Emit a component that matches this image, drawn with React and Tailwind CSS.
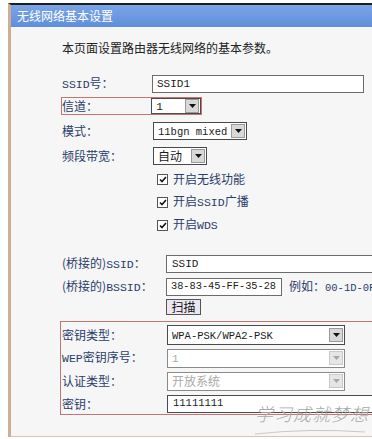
import React from "react";

const cjk = { fontFamily: '"Noto Sans CJK SC", "Noto Sans", sans-serif' };
const mono = '"Liberation Mono", "Noto Sans CJK SC", monospace';

function Latin({ children, size = "text-[11px]" }) {
  return (
    <span className={size} style={{ fontFamily: mono }}>
      {children}
    </span>
  );
}

function Arrow({ disabled }) {
  return (
    <span
      className={
        "flex h-[14px] w-[14px] shrink-0 items-center justify-center border " +
        (disabled ? "border-[#c9c9c9] bg-[#e6e6e6]" : "border-[#9a9a9a] bg-[#d8d8d8]")
      }
    >
      <svg width="7" height="4" viewBox="0 0 7 4">
        <path d="M0 0h7L3.5 4z" fill={disabled ? "#a8a8a8" : "#111"} />
      </svg>
    </span>
  );
}

function Select({ value, width, disabled, h = "h-[18px]" }) {
  return (
    <div
      className={
        "flex items-center justify-between border bg-white pl-[4px] pr-[1px] " +
        h +
        " " +
        (disabled ? "border-[#8a8a8a] text-[#a9a9a9]" : "border-[#4a4a4a] text-[#1b1b1b]")
      }
      style={{ width }}
    >
      <span className="text-[12px] leading-none">{value}</span>
      <Arrow disabled={disabled} />
    </div>
  );
}

function Check({ children }) {
  return (
    <div className="flex h-[20px] items-center pl-[95px]">
      <span className="flex h-[11px] w-[11px] items-center justify-center border border-[#555] bg-white">
        <svg width="8" height="7" viewBox="0 0 8 7">
          <path d="M1 3.5l2 2 4-4.5" stroke="#111" strokeWidth="1.6" fill="none" />
        </svg>
      </span>
      <span className="ml-[5px] text-[12px] text-[#2a3d6b]">{children}</span>
    </div>
  );
}

export default function App() {
  return (
    <div className="relative h-[439px] w-[372px] overflow-hidden bg-white" style={cjk}>
      <div className="ml-[8px] mt-[3px] flex h-[434px] flex-col border-l-[3px] border-t-2 border-l-[#cfae95] border-t-[#1e1e1e]">
        <div className="h-[22px] bg-gradient-to-b from-[#7aa4e6] to-[#5f8fdc] pl-[6px] text-[12px] leading-[22px] text-white">
          无线网络基本设置
        </div>
        <div className="flex-1 border-b border-[#d9c4b3] bg-[#f6f6f6] pl-[51px]">
          <p className="mt-[13px] text-[12px] leading-[16px] text-[#222]">
            本页面设置路由器无线网络的基本参数。
          </p>

          <div className="mt-[19px] flex h-[18px] items-center">
            <span className="w-[90px] text-[12px] text-[#2a3d6b]">
              <Latin size="text-[11.5px]">SSID</Latin>号：
            </span>
            <div className="flex h-[18px] w-[212px] items-center border border-[#6b6b6b] bg-white pl-[4px] text-[#1b1b1b]">
              <Latin>SSID1</Latin>
            </div>
          </div>

          <div className="mt-[4px] flex h-[18px] w-[141px] items-center border border-[#c77474] -ml-[1px]">
            <span className="w-[90px] text-[12px] text-[#2a3d6b]">信道：</span>
            <Select value={<Latin>1</Latin>} width={50} h="h-[16px]" />
          </div>

          <div className="mt-[7px] flex h-[18px] items-center">
            <span className="w-[91px] text-[12px] text-[#2a3d6b]">模式：</span>
            <Select value={<Latin size="text-[10.5px]">11bgn mixed</Latin>} width={94} />
          </div>

          <div className="mt-[7px] flex h-[18px] items-center">
            <span className="w-[91px] text-[12px] text-[#2a3d6b]">频段带宽：</span>
            <Select value="自动" width={54} />
          </div>

          <div className="mt-[4px] flex flex-col gap-[3px]">
            <Check>开启无线功能</Check>
            <Check>
              开启<Latin size="text-[11.5px]">SSID</Latin>广播
            </Check>
            <Check>
              开启<Latin size="text-[11.5px]">WDS</Latin>
            </Check>
          </div>

          <div className="mt-[20px] flex h-[18px] items-center">
            <span className="w-[104px] shrink-0 text-[12px] text-[#2a3d6b]">
              (桥接的)<Latin size="text-[11.5px]">SSID</Latin>：
            </span>
            <div className="flex h-[18px] w-[230px] shrink-0 items-center border border-[#6b6b6b] bg-white pl-[5px] text-[#1b1b1b]">
              <Latin>SSID</Latin>
            </div>
          </div>

          <div className="mt-[5px] flex h-[18px] items-center whitespace-nowrap">
            <span className="w-[104px] shrink-0 text-[12px] text-[#2a3d6b]">
              (桥接的)<Latin size="text-[11.5px]">BSSID</Latin>：
            </span>
            <div className="flex h-[18px] w-[116px] shrink-0 items-center border border-[#6b6b6b] bg-white pl-[4px] text-[#1b1b1b]">
              <Latin size="text-[10.3px]">38-83-45-FF-35-28</Latin>
            </div>
            <span className="ml-[7px] shrink-0 text-[12px] text-[#2a3d6b]">
              例如：<Latin size="text-[10.5px]">00-1D-0F</Latin>
            </span>
          </div>

          <div className="mt-[3px] pl-[104px]">
            <div className="flex h-[16px] w-[35px] items-center justify-center border border-[#555] bg-[#ebe7f1] text-[12px] leading-none text-[#111]">
              扫描
            </div>
          </div>

          <div className="-ml-[2px] mt-[6px] flex w-[320px] flex-col gap-[3px] border-y border-l border-[#c77474] pl-[1px] pt-[3px]">
            <div className="flex h-[20px] items-center">
              <span className="w-[105px] text-[12px] text-[#2a3d6b]">密钥类型：</span>
              <Select value={<Latin size="text-[10.5px]">WPA-PSK/WPA2-PSK</Latin>} width={178} h="h-[20px]" />
            </div>
            <div className="flex h-[20px] items-center">
              <span className="w-[105px] text-[12px] text-[#2a3d6b]">
                <Latin size="text-[11.5px]">WEP</Latin>密钥序号：
              </span>
              <Select value={<Latin>1</Latin>} width={178} disabled h="h-[19px]" />
            </div>
            <div className="flex h-[20px] items-center">
              <span className="w-[105px] text-[12px] text-[#2a3d6b]">认证类型：</span>
              <Select value="开放系统" width={178} disabled h="h-[19px]" />
            </div>
            <div className="flex h-[20px] items-center">
              <span className="w-[105px] shrink-0 text-[12px] text-[#2a3d6b]">密钥：</span>
              <div className="flex h-[18px] w-[220px] shrink-0 items-center border border-[#4a4a4a] bg-white pl-[5px] text-[#1b1b1b]">
                <Latin size="text-[10.5px]">11111111</Latin>
              </div>
            </div>
          </div>
        </div>
      </div>

      <div className="pointer-events-none absolute left-[255px] top-[402px]">
        <span
          className="text-[18px] italic leading-[22px] tracking-[1px] text-[#a9a9a9]"
          style={{ fontFamily: '"Noto Sans CJK SC", sans-serif', fontWeight: 300 }}
        >
          学习成就梦想
        </span>
        <svg className="absolute left-0 top-[27px]" width="110" height="6" viewBox="0 0 110 6">
          <path d="M0 5 Q55 -1 110 3" stroke="#c9c9c9" strokeWidth="1" fill="none" />
        </svg>
      </div>
    </div>
  );
}
